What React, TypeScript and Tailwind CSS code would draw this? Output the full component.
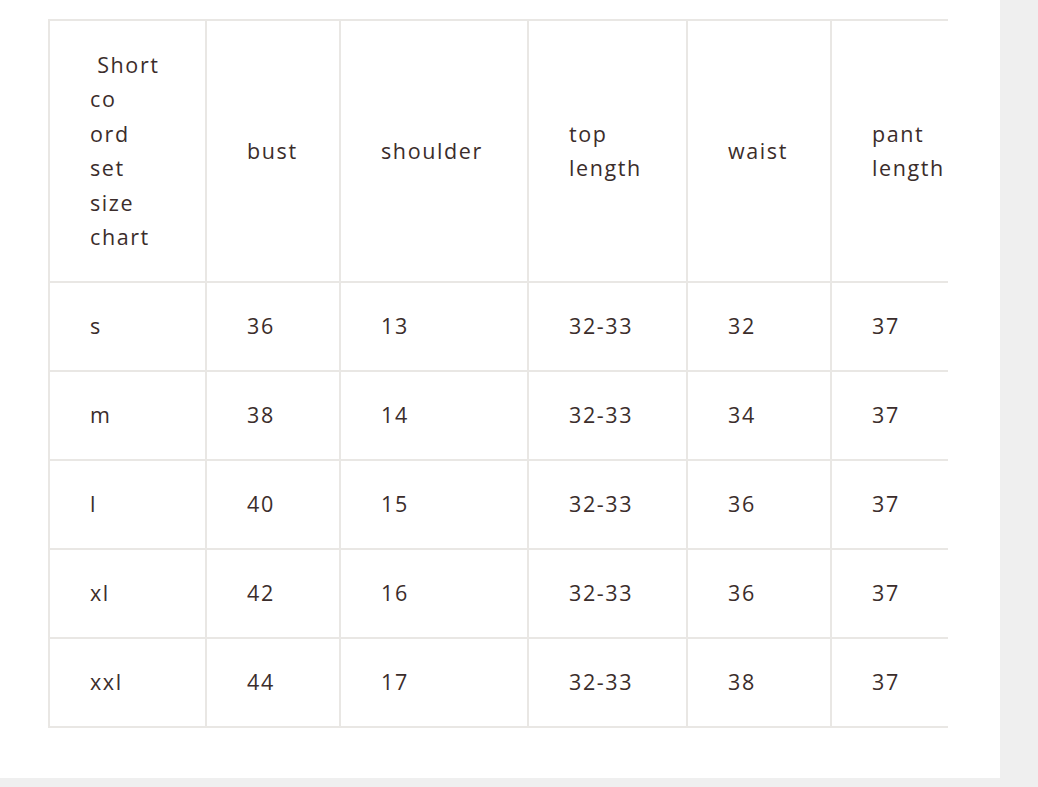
import React from 'react';

const headers = ['bust', 'shoulder', 'top length', 'waist', 'pant length'];

const rows = [
  ['s', '36', '13', '32-33', '32', '37'],
  ['m', '38', '14', '32-33', '34', '37'],
  ['l', '40', '15', '32-33', '36', '37'],
  ['xl', '42', '16', '32-33', '36', '37'],
  ['xxl', '44', '17', '32-33', '38', '37'],
];

const widths = ['w-[157px]', 'w-[134px]', 'w-[188px]', 'w-[159px]', 'w-[144px]', 'w-[130px]'];

const App: React.FC = () => {
  return (
    <div className="min-h-[787px] w-[1038px] bg-[#efefef]">
      <div
        className="h-[778px] w-[1000px] bg-white pl-[48px] pt-[19px]"
        style={{ fontFamily: '"Open Sans", "Liberation Sans", sans-serif' }}
      >
        <div className="w-[900px] overflow-hidden">
          <table className="w-[912px] table-fixed border-collapse text-[21.5px] leading-[34.5px] tracking-[1.6px] text-[#3b2d2b]">
            <colgroup>
              {widths.map((w, i) => (
                <col key={i} className={w} />
              ))}
            </colgroup>
            <thead>
              <tr className="h-[262px]">
                <th className="border-2 border-[#e9e7e4] pl-[40px] pr-[12px] text-left align-middle font-normal">
                  <span className="block whitespace-pre"> Short</span>
                  <span className="block">co</span>
                  <span className="block">ord</span>
                  <span className="block">set</span>
                  <span className="block">size</span>
                  <span className="block">chart</span>
                </th>
                {headers.map((h) => (
                  <th
                    key={h}
                    className="border-2 border-[#e9e7e4] pl-[40px] pr-[12px] text-left align-middle font-normal"
                  >
                    {h}
                  </th>
                ))}
              </tr>
            </thead>
            <tbody>
              {rows.map((r) => (
                <tr key={r[0]} className="h-[89px]">
                  {r.map((c, i) => (
                    <td key={i} className="border-2 border-[#e9e7e4] pl-[40px] pr-[12px] align-middle">
                      {c}
                    </td>
                  ))}
                </tr>
              ))}
            </tbody>
          </table>
        </div>
      </div>
    </div>
  );
};

export default App;
